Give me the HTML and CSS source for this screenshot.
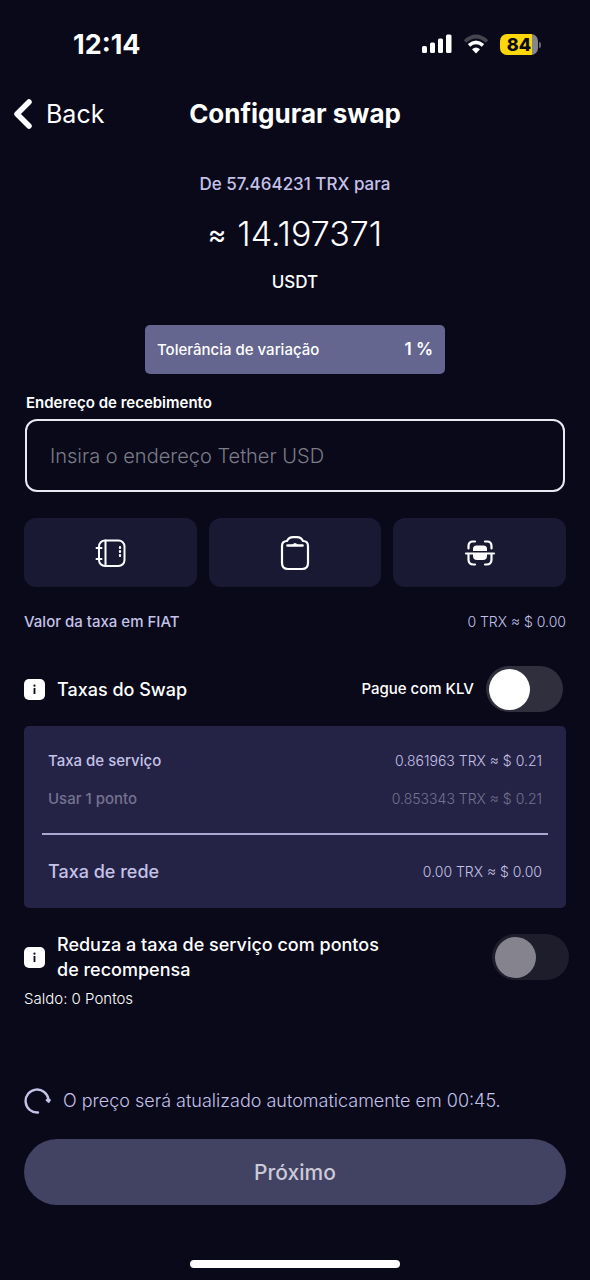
FILE: index.html
```html
<!DOCTYPE html>
<html lang="pt-BR">
<head>
<meta charset="utf-8">
<meta name="viewport" content="width=device-width, initial-scale=1">
<title>Configurar swap</title>
<link rel="stylesheet" href="styles.css">
</head>
<body>
<div class="status">
  <span class="clock">12:14</span>
  <div class="status-icons">
    <svg width="30" height="20" viewBox="0 0 30 20" fill="#fff" aria-hidden="true"><rect x="0" y="12" width="5" height="7" rx="1.5"/><rect x="8" y="8.5" width="5" height="10.5" rx="1.5"/><rect x="16" y="4.5" width="5" height="14.5" rx="1.5"/><rect x="24" y="0.5" width="5.5" height="18.5" rx="1.5"/></svg>
    <svg width="26" height="20" viewBox="0 0 26 20" fill="none" stroke-width="3.6" aria-hidden="true"><path d="M2 7.5Q13 -2.5 24 7.5" stroke="#45454f"/><path d="M6 11.3Q13 5.3 20 11.3" stroke="#fff"/><path d="M13 19.5L9 15.2Q13 11.8 17 15.2Z" fill="#fff"/></svg>
    <div class="battery"><span class="battery-level">84</span></div>
  </div>
</div>
<header class="topbar">
  <button class="back" type="button"><svg width="20" height="32" viewBox="0 0 20 32" fill="none" stroke="#fff" stroke-width="5.5" stroke-linecap="round" stroke-linejoin="round" aria-hidden="true"><path d="M15 4L3 16L15 28"/></svg>Back</button>
  <h1 class="title">Configurar swap</h1>
</header>
<main class="content">
  <section class="quote">
    <p class="quote-from">De 57.464231 TRX para</p>
    <p class="quote-amount"><span class="approx">≈</span><span>14.197371</span></p>
    <p class="quote-coin">USDT</p>
    <button class="tolerance" type="button"><span>Tolerância de variação</span><span class="tolerance-value">1 %</span></button>
  </section>
  <label class="address-label" for="address">Endereço de recebimento</label>
  <input class="address" id="address" type="text" placeholder="Insira o endereço Tether USD">
  <div class="actions">
    <button class="action" type="button" aria-label="Contatos"><svg width="32" height="36" viewBox="0 0 32 36" fill="none" stroke="#fff" stroke-width="2" stroke-linecap="round" aria-hidden="true"><rect x="5" y="5.5" width="25.5" height="25.5" rx="6"/><path d="M11.500 5.500V31M2.500 13H7.500M2.500 24H7.500"/><path d="M26 12V13M26 16V17M26 20V21" stroke-width="2.200"/></svg></button>
    <button class="action" type="button" aria-label="Colar"><svg width="32" height="36" viewBox="0 0 32 36" fill="none" stroke="#fff" stroke-width="2.2" stroke-linecap="round" stroke-linejoin="round" aria-hidden="true"><path d="M8 6Q3 6 3 11V28Q3 34 9 34H23Q29 34 29 28V11Q29 6 24 6Q22 2.200 18 2.200H14Q10 2.200 8 6Z"/><path d="M8.500 10.500H23.500" stroke-width="2.600"/><path d="M13.500 10Q16 7 18.500 10Z" fill="#fff" stroke-width="1"/></svg></button>
    <button class="action" type="button" aria-label="Escanear código"><svg width="32" height="36" viewBox="0 0 32 36" fill="none" stroke="#fff" stroke-width="2.2" stroke-linecap="round" aria-hidden="true"><path d="M4.500 13.500V11Q4.500 6.500 9 6.500H11M21 6.500H23Q27.500 6.500 27.500 11V13.500M4.500 20V24.500Q4.500 29.500 9.500 29.500H11M21 29.500H22.500Q27.500 29.500 27.500 24.500V20M2 18.500H30"/><path d="M9 16V14Q9 10.500 12.500 10.500H19.500Q23 10.500 23 14V16ZM9 18.500H23V21Q23 25 19 25H13Q9 25 9 21Z" fill="#fff" stroke="none"/></svg></button>
  </div>
  <div class="row fiat"><span class="strong">Valor da taxa em FIAT</span><span class="value">0 TRX ≈ $ 0.00</span></div>
  <div class="row swap-head">
    <div class="heading"><button class="info" type="button" aria-label="Informações sobre as taxas"><svg width="21" height="21" viewBox="0 0 21 21" aria-hidden="true"><rect width="21" height="21" rx="5" fill="#fff"/><circle cx="10.5" cy="6.7" r="1.1" fill="#09091a"/><path d="M10.500 9V15" stroke="#09091a" stroke-width="1.8"/></svg></button><h2 class="subtitle">Taxas do Swap</h2></div>
    <label class="pay"><span>Pague com KLV</span><input class="switch" type="checkbox" role="switch"></label>
  </div>
  <section class="fees">
    <div class="row"><span class="strong">Taxa de serviço</span><span class="value">0.861963 TRX ≈ $ 0.21</span></div>
    <div class="row muted"><span class="strong">Usar 1 ponto</span><span class="value">0.853343 TRX ≈ $ 0.21</span></div>
    <hr class="divider">
    <div class="row"><span class="network">Taxa de rede</span><span class="value">0.00 TRX ≈ $ 0.00</span></div>
  </section>
  <div class="row reward">
    <div class="heading"><button class="info" type="button" aria-label="Informações sobre os pontos"><svg width="21" height="21" viewBox="0 0 21 21" aria-hidden="true"><rect width="21" height="21" rx="5" fill="#fff"/><circle cx="10.5" cy="6.7" r="1.1" fill="#09091a"/><path d="M10.500 9V15" stroke="#09091a" stroke-width="1.8"/></svg></button><label class="subtitle" for="points">Reduza a taxa de serviço com pontos<br>de recompensa</label></div>
    <input class="switch" id="points" type="checkbox" role="switch" disabled>
  </div>
  <p class="balance">Saldo: 0 Pontos</p>
  <div class="refresh">
    <svg width="28" height="28" viewBox="0 0 28 28" fill="none" stroke="#c4c2e8" stroke-width="2.4" stroke-linecap="round" aria-hidden="true"><path d="M14 25.500A11.500 11.500 0 1 1 24.500 12.500"/><path d="M22.500 13H26L24.700 15Z" fill="#c4c2e8" stroke-linejoin="round" stroke-width="1.8"/></svg>
    <span>O preço será atualizado automaticamente em 00:45.</span>
  </div>
  <button class="next" type="button" disabled>Próximo</button>
</main>
<div class="home-bar"></div>
</body>
</html>
```
FILE: styles.css
```css
* { box-sizing: border-box; }
body { margin: 0; min-height: 100vh; display: flex; flex-direction: column; background: #09091a; color: #fff; font-family: Inter, "Open Sans", sans-serif; font-size: 15px; }
button, input { font: inherit; color: inherit; }
button { border: 0; padding: 0; background: none; }
h1, h2, p { margin: 0; }
svg { display: block; flex: none; }
.status { height: 88px; padding: 0 52px 0 73px; display: flex; align-items: center; justify-content: space-between; }
.clock { font-size: 27px; font-weight: 700; }
.status-icons { display: flex; align-items: center; gap: 11px; }
.battery { position: relative; width: 38px; height: 21px; border-radius: 7px; background: linear-gradient(90deg, #ffd60a 84%, #85858c 84%); text-align: center; }
.battery::after { content: ""; position: absolute; right: -3px; top: 8px; width: 2px; height: 6px; border-radius: 0 2px 2px 0; background: #66666f; }
.battery-level { display: block; font-size: 18px; font-weight: 800; line-height: 21px; color: #0a0a12; }
.topbar { height: 52px; padding: 0 14px; display: grid; grid-template-columns: 1fr auto 1fr; align-items: center; }
.back { display: flex; align-items: center; gap: 12px; font-size: 25px; }
.title { font-size: 26px; font-weight: 700; line-height: 32px; }
.content { padding: 32px 24px 0; display: flex; flex-direction: column; }
.quote { display: flex; flex-direction: column; align-items: center; }
.quote-from { font-size: 17px; font-weight: 500; line-height: 24px; color: #c4c2e8; }
.quote-amount { margin-top: 14px; display: flex; align-items: center; gap: 11px; font-size: 34px; font-weight: 300; line-height: 48px; }
.approx { font-size: 28px; font-weight: 400; }
.quote-coin { margin-top: 12px; font-size: 17px; font-weight: 500; line-height: 24px; }
.tolerance { margin-top: 31px; width: 300px; max-width: 100%; padding: 0 12px; display: flex; align-items: center; justify-content: space-between; border-radius: 5px; background: #64668f; font-size: 15px; font-weight: 500; line-height: 49px; }
.tolerance-value { font-size: 17px; font-weight: 600; }
.address-label { margin-top: 18px; padding-left: 2px; font-weight: 600; line-height: 22px; }
.address { margin: 5px 1px 0; padding: 0 23px; height: 73px; border: 2px solid #e9e9f4; border-radius: 12px; background: transparent; font-size: 20px; font-weight: 300; }
.address::placeholder { color: #7c7c88; opacity: 1; }
.actions { margin-top: 26px; display: grid; grid-template-columns: repeat(3, 1fr); gap: 12px; }
.action { height: 69px; display: grid; place-items: center; border-radius: 12px; background: #191934; }
.row { display: flex; align-items: center; justify-content: space-between; line-height: 22px; }
.fiat { margin-top: 24px; color: #c4c2e8; }
.strong { font-weight: 500; }
.value { font-size: 14px; font-weight: 300; }
.swap-head { margin-top: 33px; padding-right: 3px; }
.heading { display: flex; align-items: center; gap: 12px; }
.subtitle { font-size: 18px; font-weight: 500; line-height: 25px; }
.pay { display: flex; align-items: center; gap: 12px; font-weight: 500; }
.switch { appearance: none; margin: 0; flex: none; width: 77px; height: 46px; padding: 3px; border-radius: 23px; background: #302f3d; display: flex; align-items: center; }
.switch::before { content: ""; width: 41px; height: 41px; border-radius: 50%; background: #fff; }
.switch:checked { justify-content: flex-end; }
.switch:disabled { background: #1e1d2c; }
.switch:disabled::before { background: #84838e; }
.fees { margin-top: 14px; padding: 24px 18px 25px; border-radius: 5px; background: #252345; color: #c4c2e8; }
.fees .row { padding: 0 6px; }
.fees .muted { margin-top: 16px; color: #74728f; }
.divider { height: 2px; margin: 23px 0 26px; border: 0; background: #aaa7d2; }
.network { font-size: 18px; font-weight: 500; }
.reward { margin: 24px -3px 0 0; }
.balance { margin-top: 6px; font-size: 15px; font-weight: 300; line-height: 22px; }
.refresh { margin-top: 77px; display: flex; align-items: center; gap: 11px; color: #c4c2e8; font-size: 18px; font-weight: 300; line-height: 28px; }
.next { margin-top: 24px; height: 66px; border-radius: 33px; background: #424263; color: #cbcad8; font-size: 21px; font-weight: 500; }
.home-bar { width: 210px; height: 8px; margin: auto auto 12px; border-radius: 4px; background: #fff; }
```
